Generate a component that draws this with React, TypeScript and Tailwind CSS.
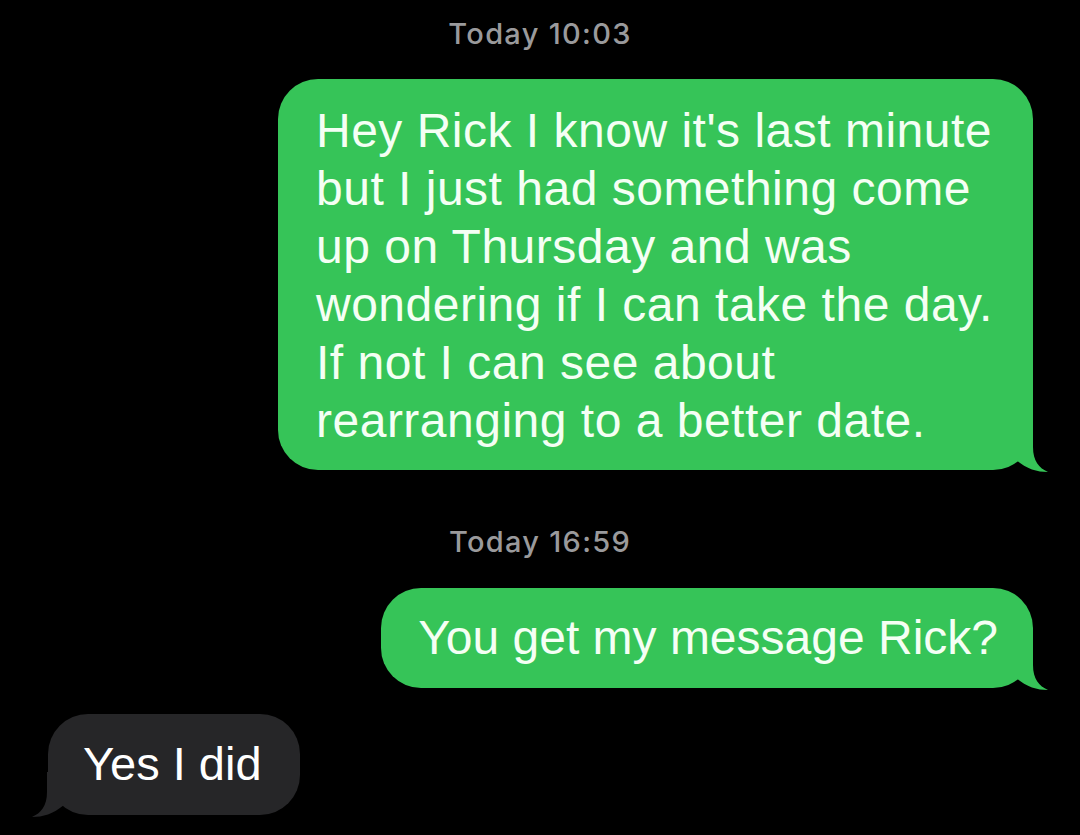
import React from "react";

const GREEN = "#36c458";
const DARK = "#262628";

function RightTail({ color }: { color: string }) {
  return (
    <svg
      className="absolute right-[-15px] bottom-[-2px]"
      width="40"
      height="45"
      viewBox="0 0 40 45"
    >
      <path
        d="M25 0 L25 20 C25 34 31 41 40 45 C29 45 19 42 8 33 L0 33 L0 0 Z"
        fill={color}
      />
    </svg>
  );
}

function LeftTail({ color }: { color: string }) {
  return (
    <svg
      className="absolute left-[-16px] bottom-[-2px]"
      width="40"
      height="45"
      viewBox="0 0 40 45"
    >
      <path
        d="M15 0 L15 20 C15 34 9 41 0 45 C11 45 21 42 32 33 L40 33 L40 0 Z"
        fill={color}
      />
    </svg>
  );
}

function Stamp({ label, time }: { label: string; time: string }) {
  return (
    <div
      className="text-center text-[29px] leading-[34px] font-medium text-[#9a9a9c] tracking-[1.3px]"
      style={{ fontFamily: 'Inter, "Liberation Sans", sans-serif' }}
    >
      {label} {time}
    </div>
  );
}

export default function App() {
  return (
    <div
      className="w-[1080px] h-[835px] bg-black flex flex-col overflow-hidden text-white"
      style={{ fontFamily: '"Liberation Sans", Arial, sans-serif' }}
    >
      <div className="pt-[17px]">
        <Stamp label="Today" time="10:03" />
      </div>

      <div className="mt-[28px] flex justify-end pr-[47px]">
        <div
          className="relative w-[755px] rounded-[40px] pt-[23px] pb-[20px] pl-[38px] text-[48px] leading-[58px] tracking-[0.5px] whitespace-nowrap text-[#f4fff4]"
          style={{ backgroundColor: GREEN }}
        >
          Hey Rick I know it's last minute
          <br />
          but I just had something come
          <br />
          up on Thursday and was
          <br />
          wondering if I can take the day.
          <br />
          If not I can see about
          <br />
          rearranging to a better date.
          <RightTail color={GREEN} />
        </div>
      </div>

      <div className="mt-[55px]">
        <Stamp label="Today" time="16:59" />
      </div>

      <div className="mt-[29px] flex justify-end pr-[47px]">
        <div
          className="relative rounded-[40px] pt-[21px] pb-[21px] pl-[37px] pr-[35px] text-[48px] leading-[58px] whitespace-nowrap text-[#f4fff4]"
          style={{ backgroundColor: GREEN }}
        >
          You get my message Rick?
          <RightTail color={GREEN} />
        </div>
      </div>

      <div className="mt-[26px] flex justify-start pl-[48px]">
        <div
          className="relative rounded-[40px] pt-[21px] pb-[22px] pl-[35px] pr-[38px] text-[47px] leading-[58px] whitespace-nowrap"
          style={{ backgroundColor: DARK }}
        >
          Yes I did
          <LeftTail color={DARK} />
        </div>
      </div>
    </div>
  );
}
